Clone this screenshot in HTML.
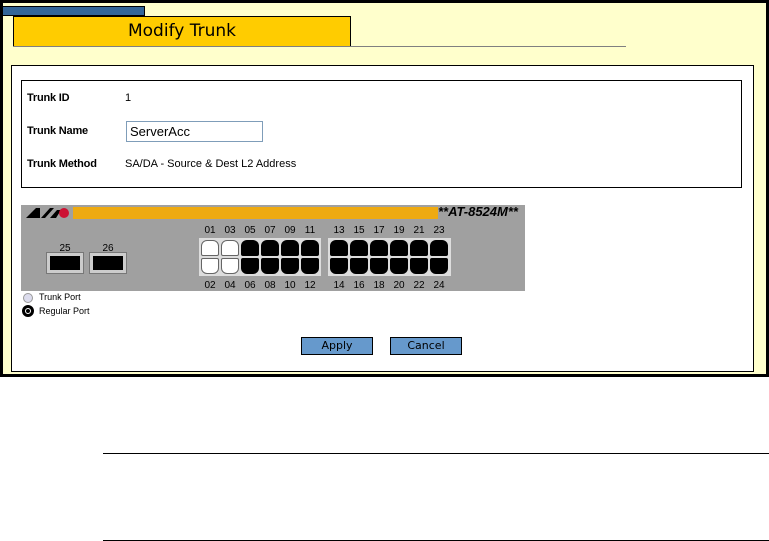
<!DOCTYPE html>
<html><head><meta charset="utf-8"><style>
*{margin:0;padding:0;box-sizing:border-box}
body{width:769px;height:541px;background:#fff;position:relative;overflow:hidden;font-family:"DejaVu Sans","Liberation Sans",sans-serif}
.a{position:absolute}
.lbl{font-family:"Liberation Sans",sans-serif;font-weight:bold;font-size:11px;letter-spacing:-0.2px}
.val{font-family:"Liberation Sans",sans-serif;font-size:11px}
.n{position:absolute;font-family:"Liberation Sans",sans-serif;font-size:10px;color:#000;width:20px;text-align:center}
.pt{position:absolute;width:18px;height:16px;background:#000;border-radius:6px 6px 2px 2px}
.pb{position:absolute;width:18px;height:16px;background:#000;border-radius:2px 2px 6px 6px}
.w{background:#fff;border:1px solid #666}
.btn{position:absolute;background:#6699cc;border:1px solid #000;font-size:11px;text-align:center;line-height:16px;height:18px;width:72px}
</style></head><body>
<div class="a" style="left:0;top:0;width:769px;height:377px;background:#000"></div>
<div class="a" style="top:3px;left:3px;width:763px;height:371px;background:#ffffcc"></div>
<div class="a" style="left:2px;top:6px;width:143px;height:10px;background:#336699;border:1px solid #000"></div>
<div class="a" style="left:13px;top:16px;width:338px;height:31px;background:#ffcc00;border:1px solid #000;border-bottom:none;text-align:center;font-size:17px;line-height:29px">Modify Trunk</div>
<div class="a" style="left:13px;top:46px;width:613px;height:1px;background:#808080"></div>
<div class="a" style="left:11px;top:65px;width:743px;height:307px;background:#fff;border:1px solid #000"></div>
<div class="a" style="left:21px;top:80px;width:721px;height:108px;border:1px solid #000"></div>
<div class="a lbl" style="left:27px;top:92px">Trunk ID</div>
<div class="a val" style="left:125px;top:92px">1</div>
<div class="a lbl" style="left:27px;top:125px">Trunk Name</div>
<div class="a" style="left:126px;top:121px;width:137px;height:21px;border:1px solid #7f9db9;font-family:'Liberation Sans',sans-serif;font-size:13px;line-height:19px;padding-left:3px">ServerAcc</div>
<div class="a lbl" style="left:27px;top:158px">Trunk Method</div>
<div class="a val" style="left:125px;top:158px">SA/DA - Source &amp; Dest L2 Address</div>

<div class="a" style="left:21px;top:205px;width:504px;height:86px;background:#a0a0a0"></div>
<svg class="a" style="left:24px;top:206px" width="50" height="14"><polygon points="2,12 12,2 16,2 16,12" fill="#000"/><polygon points="17,12 26,2 30,2 21,12" fill="#000"/><polygon points="26,12 33,4 37,4 32,12" fill="#000"/><circle cx="40" cy="7" r="5" fill="#cc1133"/></svg>
<div class="a" style="left:73px;top:207px;width:365px;height:12px;background:#eeaa11"></div>
<div class="a" style="left:438px;top:204px;font-family:'Liberation Sans',sans-serif;font-style:italic;font-weight:bold;font-size:13px">**AT-8524M**</div>
<div class="n" style="left:55px;top:243px">25</div><div class="n" style="left:98px;top:243px">26</div>
<div class="a" style="left:46px;top:252px;width:38px;height:22px;background:#ccc;border:1px solid #777"><div style="margin:3px;height:14px;background:#000"></div></div>
<div class="a" style="left:89px;top:252px;width:38px;height:22px;background:#ccc;border:1px solid #777"><div style="margin:3px;height:14px;background:#000"></div></div>
<div class="a" style="left:199px;top:238px;width:122px;height:38px;background:#ddd"></div>
<div class="a" style="left:328px;top:238px;width:123px;height:38px;background:#ddd"></div>
<div id="ports"></div>
<script>
var h='';var L=[200,220,240,260,280,300,329,349,369,389,409,429];
for(var i=0;i<12;i++){var x=L[i];var t=('0'+(2*i+1)).slice(-2),b=('0'+(2*i+2)).slice(-2);var w=i<2?' w':'';
h+='<div class="n" style="left:'+x+'px;top:225px">'+t+'</div><div class="n" style="left:'+x+'px;top:280px">'+b+'</div>';
h+='<div class="pt'+w+'" style="left:'+(x+1)+'px;top:240px"></div><div class="pb'+w+'" style="left:'+(x+1)+'px;top:258px"></div>';}
document.getElementById('ports').innerHTML=h;
</script>
<div class="a" style="left:23px;top:293px;width:10px;height:10px;border-radius:50%;background:#dde;border:1px solid #999"></div>
<div class="a val" style="left:39px;top:292px;font-size:9px">Trunk Port</div>
<div class="a" style="left:22px;top:305px;width:12px;height:12px;border-radius:50%;background:#000;border:2px solid #000"><div style="margin:1px;width:6px;height:6px;border:1px solid #fff;border-radius:50%;background:#000"></div></div>
<div class="a val" style="left:39px;top:306px;font-size:9px">Regular Port</div>
<div class="btn" style="left:301px;top:337px">Apply</div>
<div class="btn" style="left:390px;top:337px">Cancel</div>
<div class="a" style="left:103px;top:453px;width:666px;height:1px;background:#000"></div>
<div class="a" style="left:103px;top:540px;width:666px;height:1px;background:#000"></div>
</body></html>
